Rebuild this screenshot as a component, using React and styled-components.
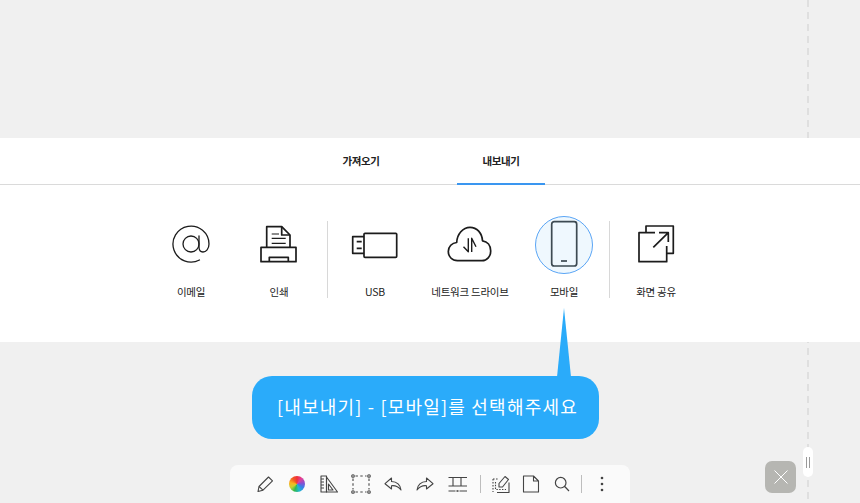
import React from "react";
import styled, { createGlobalStyle } from "styled-components";

const GlobalStyle = createGlobalStyle`
  html, body {
    margin: 0;
    padding: 0;
    background: #f0f0f0;
    font-family: "Noto Sans CJK KR", "Noto Sans", sans-serif;
  }
`;

const Page = styled.div`
  position: relative;
  display: flex;
  flex-direction: column;
  width: 860px;
  height: 503px;
  overflow: hidden;
  background: #f0f0f0;
`;

const DashedLine = styled.div`
  position: absolute;
  top: 0;
  bottom: 0;
  left: 807px;
  width: 2px;
  background: repeating-linear-gradient(to bottom, #dfdfdf 0 7px, transparent 7px 12px);
`;

const Panel = styled.section`
  position: relative;
  margin-top: 138px;
  height: 204px;
  background: #fff;
`;

const TabBar = styled.nav`
  display: flex;
  justify-content: center;
  gap: 52px;
  height: 46px;
  padding-left: 2px;
  border-bottom: 1px solid #dadada;
`;

const Tab = styled.div`
  width: 88px;
  height: 47px;
  line-height: 45px;
  text-align: center;
  font-size: 10.5px;
  font-weight: 700;
  letter-spacing: -0.4px;
  color: #222;
  box-sizing: border-box;
  border-bottom: ${(p) => (p.$active ? "2px solid #3a96f0" : "none")};
`;

const Row = styled.div`
  display: flex;
  padding: 31px 0 0 147px;
`;

const Item = styled.div`
  display: flex;
  flex-direction: column;
  align-items: center;
  width: ${(p) => p.$w || 88}px;
`;

const IconCircle = styled.div`
  width: 58px;
  height: 58px;
  box-sizing: border-box;
  border-radius: 50%;
  border: 1px solid ${(p) => (p.$on ? "#5aa5f5" : "transparent")};
  background: ${(p) => (p.$on ? "#eff8fe" : "transparent")};
  svg {
    display: block;
    margin: -1px;
  }
`;

const Label = styled.div`
  margin-top: 10px;
  line-height: 16px;
  font-size: 10.5px;
  letter-spacing: -0.25px;
  color: #222;
  white-space: nowrap;
`;

const Divider = styled.div`
  width: 1px;
  height: 77px;
  margin: 5px ${(p) => p.$r}px 0 ${(p) => p.$l}px;
  background: #d8d8d8;
`;

const Callout = styled.div`
  position: relative;
  width: 347px;
  height: 63px;
  margin: 34px 0 0 252px;
  box-sizing: border-box;
  padding-left: 25px;
  border-radius: 20px;
  background: #2aabfa;
  color: #fff;
  line-height: 61px;
  font-size: 18px;
  font-weight: 400;
  letter-spacing: 1.2px;
  white-space: nowrap;
`;

const Tail = styled.div`
  position: absolute;
  left: 305px;
  bottom: 100%;
  width: 14px;
  height: 69px;
  margin-bottom: -1px;
  background: #2aabfa;
  clip-path: polygon(50% 0, 100% 100%, 0 100%);
`;

const Toolbar = styled.div`
  display: flex;
  align-items: center;
  width: 400px;
  height: 38px;
  margin: auto 0 0 230px;
  box-sizing: border-box;
  padding: 0 0 1px 19px;
  border-radius: 8px 8px 0 0;
  background: #fafafa;
`;

const ToolButton = styled.div`
  display: flex;
  align-items: center;
  justify-content: center;
  width: ${(p) => p.$w || 32}px;
  height: 37px;
`;

const ToolDivider = styled.div`
  width: 1px;
  height: 18px;
  margin: 0 ${(p) => p.$r}px 0 ${(p) => p.$l}px;
  background: #bdbdbd;
`;

const ColorWheel = styled.div`
  width: 16px;
  height: 16px;
  border-radius: 50%;
  background: conic-gradient(#f0303a, #e0409a, #8a4fd0, #3a7fe8, #20b8d0, #30b850, #c8d030, #fbb020, #f06020, #f0303a);
`;

const CloseButton = styled.div`
  position: absolute;
  left: 765px;
  top: 461px;
  display: flex;
  align-items: center;
  justify-content: center;
  width: 31px;
  height: 32px;
  border-radius: 7px;
  background: #b6b6b2;
`;

const Handle = styled.div`
  position: absolute;
  left: 803px;
  top: 447px;
  display: flex;
  align-items: center;
  justify-content: center;
  gap: 1.5px;
  width: 10px;
  height: 30px;
  border-radius: 5px;
  background: #fff;
  i {
    width: 1px;
    height: 11px;
    background: #9a9a9a;
  }
`;

const big = { fill: "none", stroke: "#1c1c1c", strokeWidth: 1.7, strokeLinejoin: "round" };

const BigIcon = ({ children }) => (
  <svg width="58" height="58" viewBox="0 0 58 58" {...big}>
    {children}
  </svg>
);

const AtIcon = () => (
  <BigIcon>
    <g strokeWidth="1.3" strokeLinecap="round">
      <path d="M37.5 44 A18 18 0 1 1 47 28 C47 33 44 36 41 36 C38.5 36 37 34 37 31 V20" />
      <circle cx="29" cy="28" r="8" />
    </g>
  </BigIcon>
);

const PrintIcon = () => (
  <BigIcon>
    <path d="M16.7 31.3 V10.7 H31.7 L40 19 V31.3" />
    <path d="M31.7 10.7 V19 H40" />
    <path d="M21.7 18 H29 M21.7 22.3 H35.7 M21.7 27.3 H35.7" strokeWidth="1.2" />
    <rect x="11" y="31.3" width="35" height="14.4" />
    <path d="M19.3 45.7 V41.3 H38.3 V45.7" />
  </BigIcon>
);

const UsbIcon = () => (
  <BigIcon>
    <rect x="18" y="17.3" width="32.7" height="24" rx="1" />
    <path d="M18 20.7 H6.7 V37.3 H18" />
    <path d="M10.7 25.7 H15.7 M10.7 32.3 H15.7" />
  </BigIcon>
);

const CloudIcon = () => (
  <BigIcon>
    <path d="M16.5 44.7 C11 44.7 7.3 40.5 7.3 35.5 C7.3 30.5 11 26.8 15.7 26.5 C16 18 22 11.3 29 11.3 C36 11.3 41 17 41.5 24.8 C46.5 25.5 49.7 29.5 49.7 35 C49.7 40.5 46 44.7 41 44.7 Z" />
    <path d="M27.3 22.3 V35.7 L22.5 30.7 M30.7 36 V22.3 L35 30.7" strokeWidth="1.4" />
  </BigIcon>
);

const PhoneIcon = () => (
  <BigIcon>
    <g stroke="#3d4a52">
      <rect x="16.7" y="5.7" width="25" height="44.3" rx="2.5" />
      <path d="M26 45 H32" />
    </g>
  </BigIcon>
);

const ShareIcon = () => (
  <BigIcon>
    <path d="M28 16.7 H12 V45.7 H39.7 V30" />
    <path d="M19 16.7 V10 H46.3 V37.3 H39.7" />
    <path d="M26.3 31.3 L41.3 16.7 M32 16.7 H41.3 V26" />
  </BigIcon>
);

const tool = { fill: "none", stroke: "#444", strokeWidth: 1.1, strokeLinejoin: "round" };

const ToolIcon = ({ children }) => (
  <svg width="20" height="20" viewBox="0 0 20 20" {...tool}>
    {children}
  </svg>
);

const toolIcons = {
  pencil: (
    <>
      <path d="M3 17.5 L4 12.5 L13.5 3 L17.5 6.8 L8 16.2 Z" />
      <path d="M4 12.5 L8 16.2" />
    </>
  ),
  ruler: (
    <>
      <rect x="2" y="2" width="5.5" height="16" />
      <path d="M7.5 3 L18.5 18 H7.5 Z M9.5 10 L14 16 H9.5 Z" />
      <path d="M2 5 H5 M2 8 H5 M2 11 H5 M2 14 H5" />
    </>
  ),
  select: (
    <>
      <path d="M4.5 2 H15.5 M2 4.5 V15.5 M18 4.5 V15.5 M4.5 18 H15.5" strokeDasharray="2.4 2.4" />
      <circle cx="2" cy="2" r="1.3" />
      <circle cx="18" cy="2" r="1.3" />
      <circle cx="2" cy="18" r="1.3" />
      <circle cx="18" cy="18" r="1.3" />
    </>
  ),
  undo: <path d="M8.5 4 L2 9.7 L8.5 15 V11.7 C12 11.3 15.5 12.7 18 16 C17.3 10.8 13.5 7.7 8.5 7.5 Z" />,
  redo: <path d="M11.5 4 L18 9.7 L11.5 15 V11.7 C8 11.3 4.5 12.7 2 16 C2.7 10.8 6.5 7.7 11.5 7.5 Z" />,
  fit: (
    <>
      <path d="M1.5 3.5 H6 V12 H1.5 M6 3.5 H14 V12 H6 M20 3.5 H14 V12 H20" />
      <path d="M1.5 17 H8.5 M12.5 17 H20" />
      <path d="M9.5 17 H11.5" strokeWidth="1.6" />
    </>
  ),
  edit: (
    <>
      <path d="M2 5 H7 M2 5 V18" strokeDasharray="1.6 1.4" />
      <path d="M6 18.5 H18 V8.5" />
      <path d="M8 13 V9.5 L14 2.5 L17.5 5.5 L11.5 13 Z" />
      <path d="M4.5 8 V15.5 H15" strokeDasharray="1.4 1.4" />
    </>
  ),
  page: <path d="M2.5 2 H12.5 L17.5 7 V18 H2.5 Z M12.5 2 V7 H17.5" />,
  search: <path d="M13.7 12.5 L18 17 M15 8.7 A5.3 5.3 0 1 1 4.4 8.7 A5.3 5.3 0 1 1 15 8.7 Z" strokeWidth="1.2" />,
  dots: (
    <g fill="#444" stroke="none">
      <circle cx="10" cy="4" r="1.3" />
      <circle cx="10" cy="10" r="1.3" />
      <circle cx="10" cy="16" r="1.3" />
    </g>
  ),
};

const Tool = ({ name, w }) => (
  <ToolButton $w={w}>
    <ToolIcon>{toolIcons[name]}</ToolIcon>
  </ToolButton>
);

export default function App() {
  return (
    <Page>
      <GlobalStyle />
      <DashedLine />
      <Panel>
        <TabBar>
          <Tab>가져오기</Tab>
          <Tab $active>내보내기</Tab>
        </TabBar>
        <Row>
          <Item>
            <IconCircle><AtIcon /></IconCircle>
            <Label>이메일</Label>
          </Item>
          <Item>
            <IconCircle><PrintIcon /></IconCircle>
            <Label>인쇄</Label>
          </Item>
          <Divider $l={4} $r={3} />
          <Item>
            <IconCircle><UsbIcon /></IconCircle>
            <Label>USB</Label>
          </Item>
          <Item $w={102}>
            <IconCircle><CloudIcon /></IconCircle>
            <Label>네트워크 드라이브</Label>
          </Item>
          <Item $w={86}>
            <IconCircle $on><PhoneIcon /></IconCircle>
            <Label>모바일</Label>
          </Item>
          <Divider $l={2} $r={2} />
          <Item>
            <IconCircle><ShareIcon /></IconCircle>
            <Label>화면 공유</Label>
          </Item>
        </Row>
      </Panel>
      <Callout>
        <Tail />
        [내보내기] - [모바일]를 선택해주세요
      </Callout>
      <Toolbar>
        <Tool name="pencil" />
        <ToolButton><ColorWheel /></ToolButton>
        <Tool name="ruler" />
        <Tool name="select" />
        <Tool name="undo" />
        <Tool name="redo" />
        <Tool name="fit" />
        <ToolDivider $l={7} $r={5} />
        <Tool name="edit" w={30} />
        <Tool name="page" w={30} />
        <Tool name="search" w={30} />
        <ToolDivider $l={5} $r={5} />
        <Tool name="dots" w={30} />
      </Toolbar>
      <CloseButton>
        <svg width="16" height="16" viewBox="0 0 16 16" stroke="#fff" strokeWidth="1" fill="none">
          <path d="M1.5 1.5 L14.5 14.5 M14.5 1.5 L1.5 14.5" />
        </svg>
      </CloseButton>
      <Handle><i /><i /></Handle>
    </Page>
  );
}
